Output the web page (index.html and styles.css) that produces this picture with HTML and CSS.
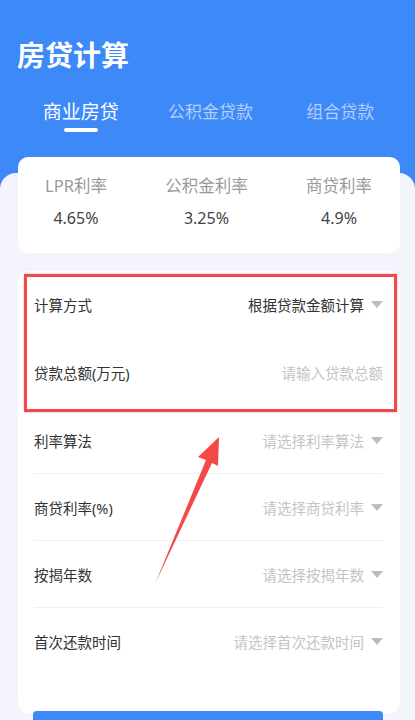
FILE: index.html
```html
<!DOCTYPE html>
<html lang="zh-CN">
<head>
  <meta charset="UTF-8">
  <meta name="viewport" content="width=415, initial-scale=1.0">
  <title>房贷计算</title>
  <link rel="stylesheet" href="styles.css">
</head>
<body>
  <div class="header">
    <h1 class="title">房贷计算</h1>
    <div class="tabs">
      <div class="tab active">商业房贷<i class="bar"></i></div>
      <div class="tab">公积金贷款</div>
      <div class="tab">组合贷款</div>
    </div>
  </div>

  <div class="sheet">
    <div class="rates">
      <div class="rate">
        <div class="rate-name">LPR利率</div>
        <div class="rate-val">4.65%</div>
      </div>
      <div class="rate">
        <div class="rate-name">公积金利率</div>
        <div class="rate-val">3.25%</div>
      </div>
      <div class="rate">
        <div class="rate-name">商贷利率</div>
        <div class="rate-val">4.9%</div>
      </div>
    </div>

    <div class="form-card">
      <div class="row bare">
        <span class="label">计算方式</span>
        <span class="pick">根据贷款金额计算<i class="caret"></i></span>
      </div>
      <div class="row bare tall">
        <span class="label">贷款总额(万元)</span>
        <span class="pick empty">请输入贷款总额</span>
      </div>
      <div class="row">
        <span class="label">利率算法</span>
        <span class="pick empty">请选择利率算法<i class="caret"></i></span>
      </div>
      <div class="row">
        <span class="label">商贷利率(%)</span>
        <span class="pick empty">请选择商贷利率<i class="caret"></i></span>
      </div>
      <div class="row">
        <span class="label">按揭年数</span>
        <span class="pick empty">请选择按揭年数<i class="caret"></i></span>
      </div>
      <div class="row bare">
        <span class="label">首次还款时间</span>
        <span class="pick empty">请选择首次还款时间<i class="caret"></i></span>
      </div>
      <div class="mark"></div>
    </div>
    <button class="calc" aria-label="开始计算"></button>
  </div>

  <svg class="arrow" width="415" height="720" viewBox="0 0 415 720">
    <polygon points="219,437 218,466 212,463 155,584 206,460 198,457" fill="#f34949"/>
  </svg>
</body>
</html>
```

FILE: styles.css
```css
body {
  margin: 0;
  position: relative;
  background: #f3f4fc;
  font-family: "Noto Sans", "Noto Sans CJK SC", sans-serif;
  overflow: hidden;
  height: 720px;
}
.header {
  background: #3d89f7;
  height: 190px;
  padding-top: 36px;
  box-sizing: border-box;
}
.title {
  margin: 0 0 0 17px;
  color: #fff;
  font-size: 28px;
  line-height: 38px;
  font-weight: bold;
}
.tabs {
  display: grid;
  grid-template-columns: repeat(3, 1fr);
  padding: 0 10px 0 16px;
  margin-top: 25px;
}
.tab {
  display: flex;
  flex-direction: column;
  align-items: center;
  color: rgba(255, 255, 255, 0.6);
  font-size: 17px;
  line-height: 26px;
}
.tab.active {
  color: #fff;
  font-size: 19px;
}
.tab .bar {
  width: 34px;
  height: 4px;
  margin-top: 3px;
  border-radius: 2px;
  background: #fff;
}

.sheet {
  display: flex;
  flex-direction: column;
  margin-top: -17px;
  padding: 0 15px 0 18px;
  background: #f3f4fc;
  border-radius: 16px 16px 0 0;
}
.rates {
  margin-top: -16px;
  height: 96px;
  box-sizing: border-box;
  padding: 18px 28px 0 27px;
  background: #fff;
  border-radius: 10px;
  display: flex;
  justify-content: space-between;
}
.rate {
  text-align: center;
}
.rate-name {
  color: #9a9a9a;
  font-size: 16.5px;
  line-height: 22px;
}
.rate-val {
  margin-top: 11px;
  color: #444;
  font-size: 16px;
  line-height: 20px;
}

.form-card {
  position: relative;
  margin-top: 18px;
  padding: 0 17px 38px 16px;
  background: #fff;
  border-radius: 10px;
}
.row {
  height: 67px;
  box-sizing: border-box;
  border-bottom: 1px solid #f0f0f3;
  display: flex;
  align-items: center;
  justify-content: space-between;
  font-size: 14.5px;
}
.row.bare {
  border-bottom-color: transparent;
}
.row.tall {
  height: 69px;
}
.label {
  color: #333;
}
.pick {
  display: flex;
  align-items: center;
  gap: 7px;
  color: #333;
}
.pick.empty {
  color: #c4c4c4;
}
.caret {
  width: 0;
  height: 0;
  border-left: 6px solid transparent;
  border-right: 6px solid transparent;
  border-top: 7px solid #bcbcbc;
}
.mark {
  position: absolute;
  left: 6px;
  top: 3px;
  width: 373px;
  height: 138px;
  box-sizing: border-box;
  border: 3px solid #f24a4a;
  box-shadow: 0 0 2px rgba(242, 74, 74, 0.5);
}
.calc {
  margin: -2px 17px 0 15px;
  height: 44px;
  border: none;
  border-radius: 4px;
  background: #3d89f7;
  position: relative;
}
.arrow {
  position: absolute;
  left: 0;
  top: 0;
}
```
